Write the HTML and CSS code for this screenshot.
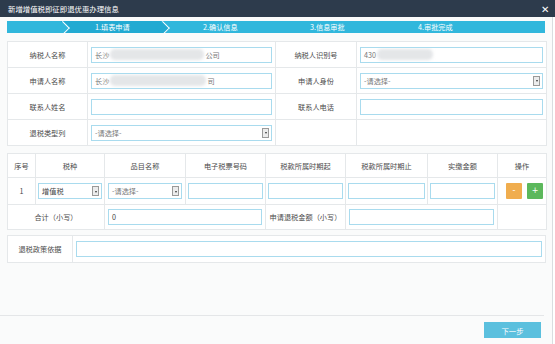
FILE: index.html
```html
<!DOCTYPE html>
<html lang="zh-CN">

<head>
	<meta charset="utf-8">
	<meta name="viewport" content="width=device-width, initial-scale=1.0">
	<title>新增增值税即征即退优惠办理信息</title>
	<link rel="stylesheet" href="styles.css">
</head>

<body>
	<div class="dialog">
		<div class="titlebar">
			<span class="title">新增增值税即征即退优惠办理信息</span>
			<span class="close">✕</span>
		</div>

		<div class="content">
			<!-- trin -->
			<div class="steps">
				<div class="step step-0"></div>
				<div class="step step-1 active">1.填表申请</div>
				<div class="step step-2">2.确认信息</div>
				<div class="step step-3">3.信息审批</div>
				<div class="step step-4">4.审批完成</div>
			</div>

			<table class="form info">
				<colgroup>
					<col style="width:80px">
					<col style="width:188px">
					<col style="width:81px">
					<col style="width:190px">
				</colgroup>
				<tr>
					<td class="label">纳税人名称</td>
					<td><div class="input">长沙<span class="blur" style="width:94px"></span>公司</div></td>
					<td class="label">纳税人识别号</td>
					<td><div class="input">430<span class="blur" style="width:56px"></span></div></td>
				</tr>
				<tr>
					<td class="label">申请人名称</td>
					<td><div class="input">长沙<span class="blur" style="width:96px"></span>司</div></td>
					<td class="label">申请人身份</td>
					<td><div class="input select"><span>-请选择-</span><span class="arrow"></span></div></td>
				</tr>
				<tr>
					<td class="label">联系人姓名</td>
					<td><div class="input"></div></td>
					<td class="label">联系人电话</td>
					<td><div class="input"></div></td>
				</tr>
				<tr>
					<td class="label">退税类型列</td>
					<td><div class="input select"><span>-请选择-</span><span class="arrow"></span></div></td>
					<td></td>
					<td></td>
				</tr>
			</table>

			<table class="form items">
				<colgroup>
					<col style="width:28px">
					<col style="width:69px">
					<col style="width:81px">
					<col style="width:80px">
					<col style="width:80px">
					<col style="width:82px">
					<col style="width:70px">
					<col style="width:49px">
				</colgroup>
				<tr class="head">
					<td>序号</td>
					<td>税种</td>
					<td>品目名称</td>
					<td>电子税票号码</td>
					<td>税款所属时期起</td>
					<td>税款所属时期止</td>
					<td>实缴金额</td>
					<td>操作</td>
				</tr>
				<tr class="row">
					<td class="label">1</td>
					<td><div class="input select dark"><span>增值税</span><span class="arrow"></span></div></td>
					<td class="wide"><div class="input select"><span>-请选择-</span><span class="arrow"></span></div></td>
					<td><div class="input"></div></td>
					<td><div class="input"></div></td>
					<td><div class="input"></div></td>
					<td><div class="input"></div></td>
					<td>
						<div class="actions">
							<button class="btn minus">-</button>
							<button class="btn plus">+</button>
						</div>
					</td>
				</tr>
				<tr class="sum">
					<td class="label" colspan="2">合计（小写）</td>
					<td class="wide" colspan="2"><div class="input dark">0</div></td>
					<td class="label">申请退税金额（小写）</td>
					<td class="wide" colspan="2"><div class="input"></div></td>
					<td></td>
				</tr>
			</table>

			<table class="form policy">
				<colgroup>
					<col style="width:65px">
					<col>
				</colgroup>
				<tr>
					<td class="label">退税政策依据</td>
					<td><div class="input"></div></td>
				</tr>
			</table>

			<div class="footer">
				<button class="next">下一步</button>
			</div>
		</div>
	</div>
</body>

</html>
```

FILE: styles.css
```css
* {
	box-sizing: border-box;
}

body {
	margin: 0;
	font-family: "Noto Sans CJK SC", "Noto Sans", sans-serif;
	background: #fff;
}

.dialog {
	width: 555px;
	height: 344px;
	display: flex;
	flex-direction: column;
}

/*		titel-linje		*/

.titlebar {
	height: 17px;
	background: #2d3b4c;
	color: #fff;
	display: flex;
	align-items: center;
	justify-content: space-between;
	padding: 0 6px 0 8px;
	font-size: 7.4px;
}

.titlebar .close {
	font-size: 10px;
	line-height: 10px;
}

.content {
	flex: 1;
	width: 553px;
	display: flex;
	flex-direction: column;
	background: #fafbfb;
	border-right: 1px solid #d9dde0;
	padding: 4px 6px 0 7px;
}

/*		trin		*/

.steps {
	width: 538px;
	height: 12px;
	display: flex;
	background: #31b7dc;
	color: #fff;
	font-size: 7.2px;
	line-height: 12px;
	overflow: hidden;
}

.step {
	position: relative;
	white-space: nowrap;
}

.step-0 {
	width: 54px;
}

.step-1 {
	width: 100px;
	padding-left: 34px;
	background: #22aad2;
}

.step-2 {
	width: 118px;
	padding-left: 42px;
}

.step-3 {
	width: 108px;
	padding-left: 31px;
}

.step-4 {
	flex: 1;
	padding-left: 31px;
}

.step-1::before,
.step-2::before {
	content: "";
	position: absolute;
	top: 1.75px;
	left: -3.5px;
	width: 8.5px;
	height: 8.5px;
	background: #31b7dc;
	border-top: 1.3px solid #fff;
	border-right: 1.3px solid #fff;
	transform: rotate(45deg);
	z-index: 1;
}

.step-2::before {
	background: #22aad2;
}

/*		tabeller		*/

.form {
	width: 539px;
	border-collapse: collapse;
	table-layout: fixed;
	background: #fff;
	font-size: 7.2px;
	color: #4a4a4a;
}

.form td {
	border: 1px solid #e5e8ea;
	padding: 0 3px;
	vertical-align: middle;
}

.form .label {
	text-align: center;
	white-space: nowrap;
}

.info {
	margin-top: 8px;
}

.info tr {
	height: 26px;
}

.items {
	margin-top: 7px;
}

.items td {
	padding: 0 2px;
}

.items .wide {
	padding: 0 3px;
}

.items .head {
	height: 24px;
}

.items .head td {
	text-align: center;
	white-space: nowrap;
}

.items .row {
	height: 27px;
}

.items .sum {
	height: 25px;
}

.policy {
	margin-top: 5px;
}

.policy tr {
	height: 27px;
}

/*		felter		*/

.input {
	width: 100%;
	height: 16px;
	border: 1px solid #a9dbee;
	background: #fff;
	color: #777;
	padding: 0 3px;
	font-size: 7.2px;
	line-height: 14px;
	display: flex;
	align-items: center;
	white-space: nowrap;
	overflow: hidden;
}

.input.dark {
	color: #444;
}

.blur {
	display: inline-block;
	height: 11px;
	background: #e4e6e8;
	border-radius: 5px;
	filter: blur(1.5px);
	margin: 0 1px;
}

.select {
	justify-content: space-between;
	padding-right: 2px;
}

.select .arrow {
	width: 7px;
	height: 10px;
	border: 1px solid #9a9a9a;
	background: #ececec;
	position: relative;
	flex: none;
}

.select .arrow::after {
	content: "";
	position: absolute;
	left: 1.5px;
	top: 3.5px;
	border-left: 1.5px solid transparent;
	border-right: 1.5px solid transparent;
	border-top: 2px solid #333;
}

.actions {
	display: flex;
	justify-content: flex-end;
	gap: 5px;
	padding-right: 1px;
}

.btn {
	width: 16px;
	height: 16px;
	border: none;
	border-radius: 1px;
	padding: 0;
	color: #fff;
	font-size: 8px;
	line-height: 16px;
	font-family: "DejaVu Sans", sans-serif;
}

.btn.minus {
	background: #f0ad4e;
}

.btn.plus {
	background: #5cb85c;
}

/*		bund		*/

.footer {
	margin: auto 2px 0 -7px;
	height: 29px;
	border-top: 1px solid #e4e6e8;
	display: flex;
	justify-content: flex-end;
	align-items: flex-start;
	padding: 6px 3px 0 0;
}

.next {
	width: 57px;
	height: 16px;
	border: none;
	background: #5bc0de;
	color: #fff;
	font-family: "Noto Sans CJK SC", sans-serif;
	font-size: 7.4px;
	padding: 0;
}
```
